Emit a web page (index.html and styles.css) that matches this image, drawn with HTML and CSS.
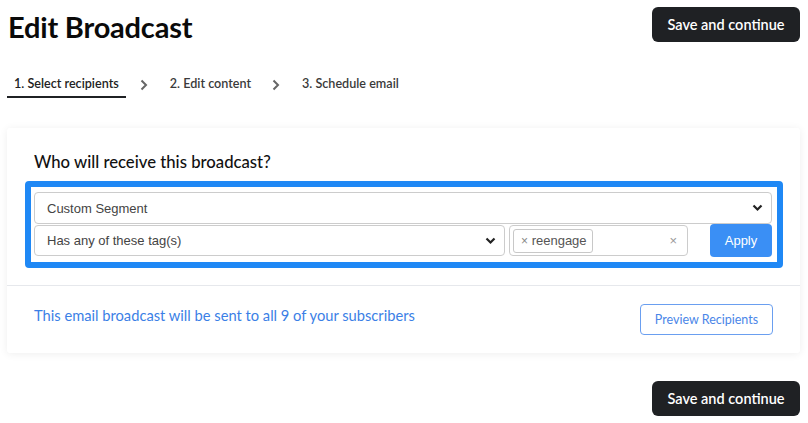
FILE: index.html
```html
<!DOCTYPE html>
<html>
<head>
<meta charset="utf-8">
<link rel="stylesheet" href="styles.css">
</head>
<body>
<div class="page">
  <div class="header">
    <h1 class="title">Edit Broadcast</h1>
    <button class="btn-dark">Save and continue</button>
  </div>
  <div class="tabs">
    <div class="tab active">1. Select recipients</div>
    <svg class="chev" width="8" height="12" viewBox="0 0 8 12"><path d="M1.5 1.5 L6 6 L1.5 10.5" fill="none" stroke="#666" stroke-width="2"/></svg>
    <div class="tab">2. Edit content</div>
    <svg class="chev" width="8" height="12" viewBox="0 0 8 12"><path d="M1.5 1.5 L6 6 L1.5 10.5" fill="none" stroke="#666" stroke-width="2"/></svg>
    <div class="tab">3. Schedule email</div>
  </div>
  <div class="card">
    <div class="card-top">
      <h2 class="question">Who will receive this broadcast?</h2>
      <div class="segment-box">
        <div class="select full">
          <span>Custom Segment</span>
          <svg class="caret" width="11" height="8" viewBox="0 0 11 8"><path d="M1.5 1.5 L5.5 5.5 L9.5 1.5" fill="none" stroke="#222" stroke-width="2.2"/></svg>
        </div>
        <div class="row">
          <div class="select cond">
            <span>Has any of these tag(s)</span>
            <svg class="caret" width="11" height="8" viewBox="0 0 11 8"><path d="M1.5 1.5 L5.5 5.5 L9.5 1.5" fill="none" stroke="#222" stroke-width="2.2"/></svg>
          </div>
          <div class="tags">
            <span class="chip"><span class="x">×</span> reengage</span>
            <span class="clear">×</span>
          </div>
          <button class="btn-apply">Apply</button>
        </div>
      </div>
    </div>
    <div class="card-bottom">
      <p class="summary">This email broadcast will be sent to all 9 of your subscribers</p>
      <button class="btn-outline">Preview Recipients</button>
    </div>
  </div>
  <div class="footer">
    <button class="btn-dark">Save and continue</button>
  </div>
</div>
</body>
</html>
```

FILE: styles.css
```css
* { box-sizing: border-box; }
body {
  margin: 0;
  background: #fff;
  font-family: "Lato", "Noto Sans", sans-serif;
  color: #111;
}
.page { padding: 7px 8px 0 7px; }
.header {
  display: flex;
  justify-content: space-between;
  align-items: flex-start;
}
.title {
  margin: 2px 0 0 1px;
  font-size: 29px;
  line-height: 36px;
  font-weight: 700;
  color: #0a0a0a;
  letter-spacing: -0.2px;
}
.btn-dark {
  width: 148px;
  height: 35px;
  border: none;
  border-radius: 6px;
  background: #1f2124;
  color: #fff;
  font-family: "Lato", "Noto Sans", sans-serif;
  font-size: 14.5px;
  font-weight: 600;
  padding: 0;
}
.tabs {
  display: flex;
  align-items: center;
  margin-top: 27px;
  gap: 14px;
}
.tab {
  height: 26px;
  padding: 4px 7px 0;
  font-size: 12.6px;
  line-height: 16px;
  font-weight: 600;
  color: #3a3a3a;
  border-bottom: 2px solid transparent;
}
.tab.active { border-bottom-color: #1f2124; color: #222; }
.chev { margin: 0 1px 0 0; }
.card {
  margin-top: 30px;
  background: #fff;
  box-shadow: 0 1px 8px rgba(0,0,0,0.07);
  border-radius: 3px;
}
.card-top {
  padding: 24px 17px 17px 18px;
  border-bottom: 1px solid #e6e8ec;
}
.question {
  margin: 0 0 9px 9px;
  font-size: 16.7px;
  line-height: 20px;
  font-weight: 500;
  color: #111;
}
.segment-box {
  border: 6px solid #1f88f5;
  border-radius: 4px;
  padding: 5px 5px 5px 3px;
  display: flex;
  flex-direction: column;
  gap: 1px;
}
.select {
  height: 32px;
  border: 1px solid #ccc;
  border-radius: 4px;
  background: #fff;
  display: flex;
  align-items: center;
  justify-content: space-between;
  padding: 0 8px 0 12px;
  font-family: "Liberation Sans", Arial, sans-serif;
  font-size: 13px;
  color: #444;
}
.row {
  display: flex;
  align-items: flex-start;
}
.select.cond { width: 471px; height: 31px; }
.tags {
  width: 179px;
  height: 31px;
  margin-left: 4px;
  border: 1px solid #ccc;
  border-radius: 4px;
  display: flex;
  align-items: center;
  justify-content: space-between;
  padding: 0 10px 0 3px;
  font-family: "Liberation Sans", Arial, sans-serif;
}
.chip {
  border: 1px solid #c8c8c8;
  border-radius: 3px;
  padding: 3px 5px 3px 7px;
  font-size: 13px;
  line-height: 15px;
  color: #555;
}
.chip .x { color: #888; font-size: 12px; }
.clear { color: #999; font-size: 13px; }
.btn-apply {
  margin-left: auto;
  margin-right: 0;
  margin-top: -1px;
  width: 62px;
  height: 33px;
  border: none;
  border-radius: 4px;
  background: #3a8ff5;
  color: #fff;
  font-family: "Liberation Sans", Arial, sans-serif;
  font-size: 13px;
}
.card-bottom {
  display: flex;
  justify-content: space-between;
  align-items: flex-start;
  padding: 18px 27px 18px 27px;
}
.summary {
  margin: 2px 0 0 0;
  font-size: 14.7px;
  line-height: 18px;
  color: #3b7fe6;
}
.btn-outline {
  width: 133px;
  height: 31px;
  border: 1px solid #6a9ff0;
  border-radius: 4px;
  background: #fff;
  color: #4a86e8;
  font-family: "Lato", "Noto Sans", sans-serif;
  font-size: 12.5px;
  padding: 0;
}
.footer {
  display: flex;
  justify-content: flex-end;
  margin-top: 28px;
}
```
